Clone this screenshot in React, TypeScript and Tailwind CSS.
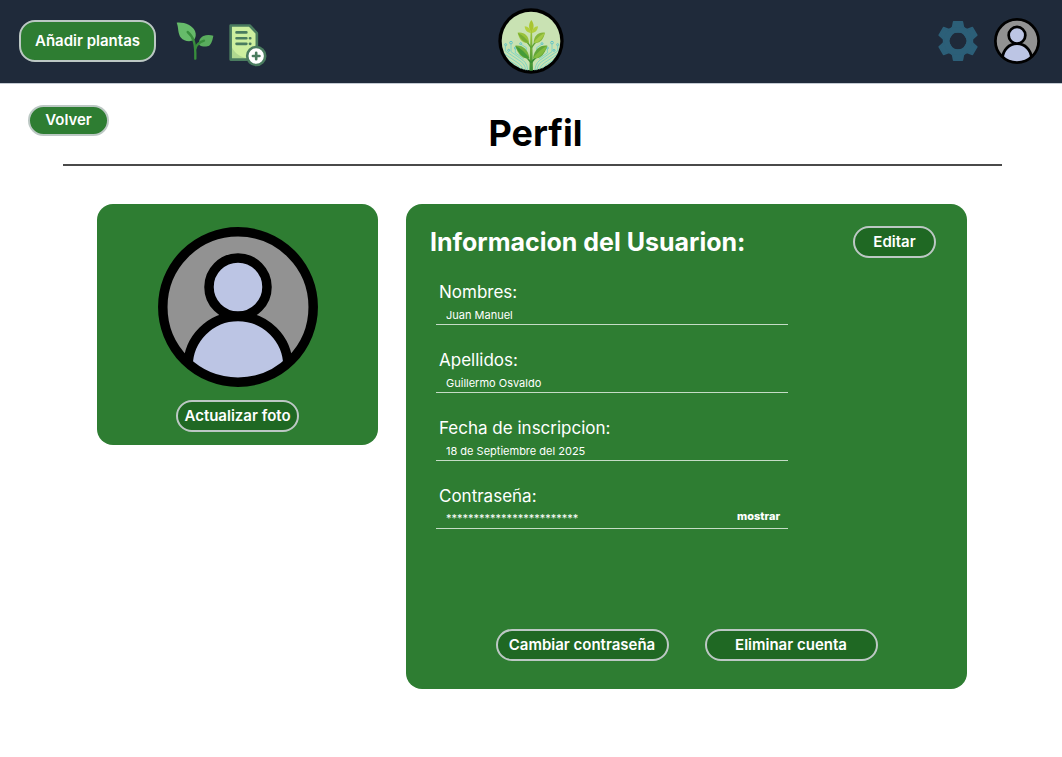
import React from "react";

function UserAvatar({ className }: { className: string }) {
  const clipId = React.useId();
  return (
    <svg viewBox="0 0 160 160" className={className} role="img" aria-label="Foto de perfil">
      <clipPath id={clipId}>
        <circle cx="80" cy="80" r="75" />
      </clipPath>
      <circle cx="80" cy="80" r="75" fill="#929292" />
      <g clipPath={`url(#${clipId})`} fill="#bcc5e4" stroke="#000" strokeWidth="9.5">
        <circle cx="80" cy="139.5" r="50" />
        <circle cx="80" cy="60" r="29" />
      </g>
      <circle cx="80" cy="80" r="75.2" fill="none" stroke="#000" strokeWidth="9.5" />
    </svg>
  );
}

function SproutIcon() {
  return (
    <svg viewBox="20 37 112 114" className="h-[38px] w-[38px]" aria-hidden="true">
      <path d="M21 39C45 37 68 47 76 64C80 74 79 85 72 92C58 97 42 94 34 84C24 72 27 52 21 39Z" fill="#66bb6a" />
      <path d="M131 78C128 95 124 107 113 110C104 112 95 110 89 106C86 96 90 84 101 79C110 75 121 75 131 78Z" fill="#5aad5e" />
      <path d="M54 67C72 82 78 100 77 147" fill="none" stroke="#388e3c" strokeWidth="7" strokeLinecap="round" />
      <path d="M77 117C80 105 91 97 103 93" fill="none" stroke="#388e3c" strokeWidth="7" strokeLinecap="round" />
    </svg>
  );
}

function AddDocumentIcon() {
  return (
    <svg viewBox="177 42 116 130" className="h-[43px] w-[38px]" aria-hidden="true">
      <path d="M182 46H240L262 69V150H182Z" fill="#cdef9f" />
      <path d="M182 105C192 128 206 141 232 146V150H182Z" fill="#b0d890" />
      <path d="M182 46H240L262 69V150H182Z" fill="none" stroke="#4a7c5f" strokeWidth="8" strokeLinejoin="round" />
      <path d="M200 67H230M200 85H230M200 102H230M241 85H242M241 102H242" stroke="#4a7c5f" strokeWidth="8" strokeLinecap="round" />
      <circle cx="260" cy="139" r="27.5" fill="#fff" stroke="#4a7c5f" strokeWidth="8" />
      <path d="M260 129V149M250 139H270" stroke="#4a7c5f" strokeWidth="8" strokeLinecap="round" />
    </svg>
  );
}

function GearIcon() {
  return (
    <svg viewBox="-20 -20 40 40" className="h-10 w-10" aria-hidden="true">
      <g fill="#2c5f78" stroke="#2c5f78" strokeWidth="1.6" strokeLinejoin="round">
        {[0, 60, 120, 180, 240, 300].map((angle) => (
          <path key={angle} transform={`rotate(${angle})`} d="M-4.4-19.2H4.4L5.4-13.8L7.6-12V-9H-7.6V-12L-5.4-13.8Z" />
        ))}
      </g>
      <circle r="11.2" fill="none" stroke="#2c5f78" strokeWidth="5.6" />
    </svg>
  );
}

function PlantLogo() {
  return (
    <svg viewBox="27 23 198 198" className="h-[66px] w-[66px]" role="img" aria-label="Logo de planta">
      <defs>
        <clipPath id="logo-disc">
          <circle cx="126" cy="122" r="89" />
        </clipPath>
        <linearGradient id="logo-stem" x1="0" y1="0" x2="0" y2="1">
          <stop offset="0" stopColor="#a4c83a" />
          <stop offset="1" stopColor="#2f8a35" />
        </linearGradient>
      </defs>
      <circle cx="126" cy="122" r="98" fill="#000" />
      <circle cx="126" cy="122" r="88" fill="#c9e2b3" />
      <g clipPath="url(#logo-disc)">
        <g fill="none" stroke="#6fd0c6" strokeWidth="2.4">
          <path d="M49 136V152L96 184Q111 194 111 220" />
          <path d="M66 132V154L102 180Q117 191 117 220" />
          <path d="M79 146V158L104 175" />
          <path d="M42 158L86 187Q104 199 105 220" />
          <path d="M44 170L84 195Q98 204 99 220" />
          <path d="M50 184L78 201Q90 208 92 220" />
          <path d="M96 132L112 142V160" />
          <path d="M206 136V152L158 184Q143 194 143 220" />
          <path d="M189 132V154L152 180Q137 191 137 220" />
          <path d="M175 146V158L150 175" />
          <path d="M211 158L167 187Q150 199 149 220" />
          <path d="M209 170L169 195Q156 204 155 220" />
          <path d="M203 184L175 201Q164 208 162 220" />
          <path d="M158 132L143 142V160" />
        </g>
        <g fill="#c9e2b3" stroke="#5fc3c7" strokeWidth="3">
          <circle cx="50" cy="133" r="3" />
          <circle cx="66" cy="127" r="4" />
          <circle cx="59" cy="150" r="3" />
          <circle cx="79" cy="143" r="3" />
          <circle cx="95" cy="130" r="3" />
          <circle cx="159" cy="130" r="3" />
          <circle cx="175" cy="143" r="3" />
          <circle cx="189" cy="127" r="4" />
          <circle cx="195" cy="150" r="3" />
          <circle cx="206" cy="133" r="3" />
        </g>
        <path d="M125 85H129L132 220H121Z" fill="url(#logo-stem)" />
        <g fill="none" stroke="#5da334" strokeWidth="4">
          <path d="M127 143Q121 130 108 121M127 143Q133 130 146 121" />
          <path d="M126 188Q121 178 102 161M127 188Q132 178 152 161" stroke="#398f35" strokeWidth="5" />
        </g>
        <path d="M127 59C136 70 136 84 127 96C118 84 118 70 127 59Z" fill="#a9c52f" />
        <path d="M107 78C118 79 125 86 126 98C114 97 108 90 107 78ZM147 78C136 79 129 86 128 98C140 97 146 90 147 78Z" fill="#b2cf3e" />
        <path d="M86 97C105 94 119 105 120 127C101 130 91 118 86 97Z" fill="#9ac33c" />
        <path d="M168 97C149 94 135 105 134 127C153 130 163 118 168 97Z" fill="#86b637" />
        <path d="M79 136C102 134 118 148 121 174C98 176 88 162 79 136Z" fill="#74b13c" />
        <path d="M175 136C152 134 136 148 132 174C156 176 166 162 175 136Z" fill="#62a637" />
        <path d="M86 97Q108 108 120 127Q101 130 86 97Z" fill="#78ad35" />
        <path d="M168 97Q146 108 134 127Q154 130 168 97Z" fill="#a5ca48" />
        <path d="M79 136Q105 149 121 174Q96 176 79 136Z" fill="#449b38" />
        <path d="M175 136Q149 149 132 174Q158 176 175 136Z" fill="#82bb3e" />
      </g>
    </svg>
  );
}

const pill =
  "flex items-center justify-center rounded-2xl border-2 border-[#bcc8c4] text-[15px] font-semibold whitespace-nowrap text-white";

function Field({ id, label, value, children }: { id: string; label: string; value: string; children?: React.ReactNode }) {
  return (
    <div className="flex h-[45px] flex-col justify-between border-b border-[#c5dcc6]">
      <label htmlFor={id} className="pl-[3px] text-[17px] leading-6">
        {label}
      </label>
      <div className="flex items-center pr-2 pl-[10px]">
        <input id={id} readOnly defaultValue={value} className="h-[18px] min-w-0 flex-1 bg-transparent text-[11px] text-white outline-none" />
        {children}
      </div>
    </div>
  );
}

export default function App() {
  return (
    <div className="min-h-screen bg-white font-['Inter',sans-serif]">
      <header className="grid grid-cols-[1fr_auto_1fr] items-center border-b border-[#c3cad2] bg-[#1f2a3a] px-[19px] pt-2 pb-[9px]">
        <div className="flex items-center">
          <button className={`${pill} h-[42px] w-[137px] bg-[#2e7d32]`}>Añadir plantas</button>
          <button className="ml-5" aria-label="Plantas">
            <SproutIcon />
          </button>
          <button className="mt-2 ml-[15px]" aria-label="Agregar registro">
            <AddDocumentIcon />
          </button>
        </div>
        <PlantLogo />
        <div className="flex items-center justify-end gap-4 pr-[3px]">
          <button aria-label="Configuración">
            <GearIcon />
          </button>
          <button aria-label="Perfil">
            <UserAvatar className="h-[46px] w-[46px]" />
          </button>
        </div>
      </header>

      <main className="pb-8">
        <div className="grid grid-cols-[1fr_auto_1fr] items-start pt-[21px] pr-[19px] pl-7">
          <button className={`${pill} h-[31px] w-[81px] bg-[#2e7d32]`}>Volver</button>
          <h1 className="pt-1 text-4xl leading-[48px] font-bold text-black">Perfil</h1>
        </div>
        <hr className="mr-[60px] ml-[63px] mt-[7px] border-t-2 border-[#4a4a4a]" />

        <div className="flex items-start gap-7 pt-[38px] pr-[95px] pl-[97px] text-white">
          <section className="flex w-[281px] shrink-0 flex-col items-center gap-[13px] rounded-2xl bg-[#2e7d32] pt-[23px] pb-[13px]">
            <UserAvatar className="h-40 w-40" />
            <button className={`${pill} h-8 w-[123px] bg-[#1f6823]`}>Actualizar foto</button>
          </section>

          <section className="min-w-0 flex-1 rounded-2xl bg-[#2e7d32] pt-[22px] pb-7">
            <div className="flex items-center justify-between pr-[31px] pl-6">
              <h2 className="text-[25px] leading-8 font-bold">Informacion del Usuarion:</h2>
              <button className={`${pill} h-8 w-[83px] bg-[#1f6823]`}>Editar</button>
            </div>

            <form className="mt-[22px] ml-[30px] flex w-[352px] flex-col gap-[23px]">
              <Field id="nombres" label="Nombres:" value="Juan Manuel" />
              <Field id="apellidos" label="Apellidos:" value="Guillermo Osvaldo" />
              <Field id="fecha" label="Fecha de inscripcion:" value="18 de Septiembre del 2025" />
              <Field id="contrasena" label="Contraseña:" value="************************">
                <button type="button" className="pb-1 text-[11px] font-extrabold">
                  mostrar
                </button>
              </Field>
            </form>

            <div className="mt-[100px] flex justify-center gap-9">
              <button className={`${pill} h-8 w-[173px] bg-[#1f6823]`}>Cambiar contraseña</button>
              <button className={`${pill} h-8 w-[173px] bg-[#1f6823]`}>Eliminar cuenta</button>
            </div>
          </section>
        </div>
      </main>
    </div>
  );
}
